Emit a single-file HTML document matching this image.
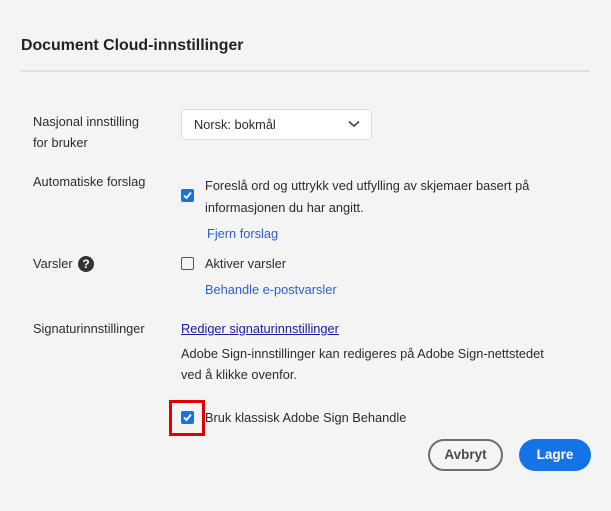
<!DOCTYPE html>
<html><head><style>
body{margin:0;width:611px;height:511px;background:#f4f4f4;font-family:"Liberation Sans",sans-serif;color:#2c2c2c;position:relative;overflow:hidden}
.a{position:absolute;white-space:nowrap}
.t{font-size:12.8px}
.link{color:#2c5fcf;font-size:12.8px}
.cb{position:absolute;width:13px;height:13px;border-radius:2px;background:#1473e6}
.cb svg{position:absolute;left:1px;top:1px}
.ub{position:absolute;width:11px;height:11px;border:1.5px solid #555;border-radius:2px}
</style></head><body>
<div class="a" style="left:21px;top:37px;font-size:15.9px;font-weight:bold;color:#222">Document Cloud-innstillinger</div>
<div class="a" style="left:20px;top:70px;width:570px;height:2px;background:#e1e1e1"></div>

<div class="a t" style="left:33px;top:111px;line-height:21px">Nasjonal innstilling<br>for bruker</div>
<div class="a" style="left:181px;top:109px;width:191px;height:31px;background:#fff;border:1px solid #ddd;border-radius:4px;box-sizing:border-box"></div>
<div class="a t" style="left:194px;top:117px">Norsk: bokmål</div>
<svg class="a" style="left:348px;top:120px" width="12" height="8"><path d="M1 1.5L6 6L11 1.5" stroke="#444" stroke-width="1.6" fill="none"/></svg>

<div class="a t" style="left:33px;top:174px">Automatiske forslag</div>
<div class="cb" style="left:181px;top:189px"><svg width="11" height="11"><path d="M2 5.5L4.5 8L9 2.5" stroke="#fff" stroke-width="1.8" fill="none"/></svg></div>
<div class="a t" style="left:205px;top:175px;line-height:22px">Foreslå ord og uttrykk ved utfylling av skjemaer basert på<br>informasjonen du har angitt.</div>
<div class="a link" style="left:207px;top:226px">Fjern forslag</div>

<div class="a t" style="left:33px;top:256px">Varsler</div>
<div class="a" style="left:78px;top:256px;width:16px;height:16px;border-radius:50%;background:#333;color:#fff;font-size:12px;font-weight:bold;text-align:center;line-height:16px">?</div>
<div class="ub" style="left:181px;top:257px"></div>
<div class="a t" style="left:205px;top:256px">Aktiver varsler</div>
<div class="a link" style="left:205px;top:282px">Behandle e-postvarsler</div>

<div class="a t" style="left:33px;top:321px">Signaturinnstillinger</div>
<div class="a" style="left:181px;top:321px;font-size:12.8px;color:#1a1aa8;text-decoration:underline">Rediger signaturinnstillinger</div>
<div class="a t" style="left:181px;top:343px;line-height:21px">Adobe Sign-innstillinger kan redigeres på Adobe Sign-nettstedet<br>ved å klikke ovenfor.</div>

<div class="a" style="left:169px;top:400px;width:30px;height:30px;border:3px solid #e00000"></div>
<div class="cb" style="left:181px;top:411px"><svg width="11" height="11"><path d="M2 5.5L4.5 8L9 2.5" stroke="#fff" stroke-width="1.8" fill="none"/></svg></div>
<div class="a t" style="left:205px;top:410px">Bruk klassisk Adobe Sign Behandle</div>

<div class="a" style="left:428px;top:439px;width:75px;height:32px;border:2px solid #6e6e6e;border-radius:16px;box-sizing:border-box;text-align:center;line-height:28px;font-size:13.5px;font-weight:bold;color:#4b4b4b">Avbryt</div>
<div class="a" style="left:519px;top:439px;width:72px;height:32px;background:#1473e6;border-radius:16px;text-align:center;line-height:32px;font-size:13.5px;font-weight:bold;color:#fff">Lagre</div>
</body></html>
